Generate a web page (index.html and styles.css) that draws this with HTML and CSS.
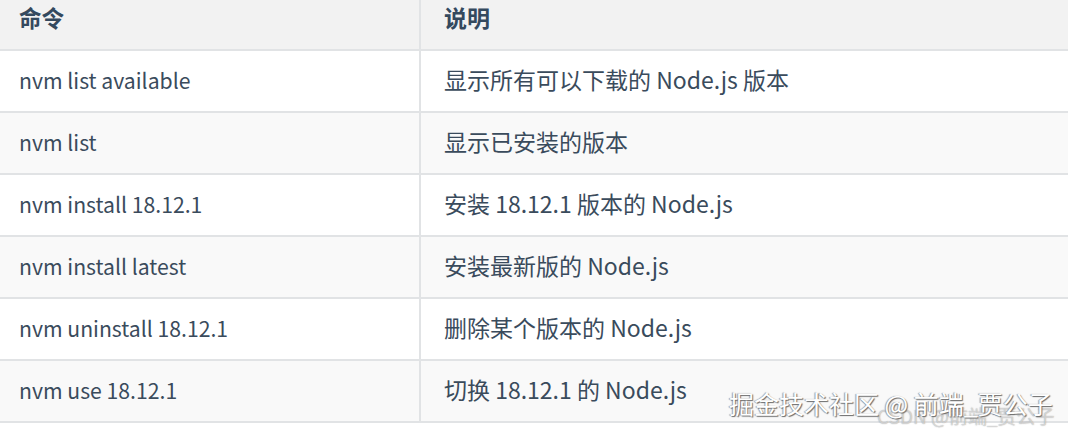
FILE: index.html
```html
<!DOCTYPE html>
<html lang="zh-CN">
<head>
<meta charset="utf-8">
<link rel="stylesheet" href="styles.css">
</head>
<body>
<div class="page">
  <table class="cmd-table">
    <thead>
      <tr><th class="c1">命令</th><th class="c2">说明</th></tr>
    </thead>
    <tbody>
      <tr><td class="c1">nvm list available</td><td class="c2">显示所有可以下载的 Node.js 版本</td></tr>
      <tr><td class="c1">nvm list</td><td class="c2">显示已安装的版本</td></tr>
      <tr><td class="c1">nvm install 18.12.1</td><td class="c2">安装 18.12.1 版本的 Node.js</td></tr>
      <tr><td class="c1">nvm install latest</td><td class="c2">安装最新版的 Node.js</td></tr>
      <tr><td class="c1">nvm uninstall 18.12.1</td><td class="c2">删除某个版本的 Node.js</td></tr>
      <tr><td class="c1">nvm use 18.12.1</td><td class="c2">切换 18.12.1 的 Node.js</td></tr>
    </tbody>
  </table>
  <div class="wm-csdn">CSDN @前端_贾公子</div>
  <div class="wm-juejin">掘金技术社区 @ 前端_贾公子</div>
</div>
</body>
</html>
```

FILE: styles.css
```css
html, body {
  margin: 0;
  padding: 0;
  background: #ffffff;
  overflow: hidden;
}
.page {
  position: relative;
  width: 1068px;
  height: 432px;
  overflow: hidden;
}
.cmd-table {
  border-collapse: collapse;
  margin-top: -13px;
  margin-left: -7px;
  width: 1100px;
  font-family: "Noto Sans CJK SC", "Noto Sans", sans-serif;
  color: #3a4b5c;
}
.cmd-table th,
.cmd-table td {
  border: 2px solid #e1e3e5;
  height: 62px;
  padding: 0 0 4px 23px;
  text-align: left;
  vertical-align: middle;
  box-sizing: border-box;
}
.cmd-table .c1 {
  width: 426px;
  padding-left: 24px;
  font-size: 21.2px;
}
.cmd-table .c2 {
  font-size: 23px;
}
.cmd-table th.c1 {
  font-size: 22.5px;
}
.cmd-table th {
  background: #f2f2f2;
  font-weight: 700;
  color: #34495e;
}
.cmd-table tbody tr:nth-child(odd) td {
  background: #ffffff;
}
.cmd-table tbody tr:nth-child(even) td {
  background: #f9f9f9;
}
.wm-csdn {
  position: absolute;
  left: 877px;
  top: 402px;
  font-family: "Noto Sans CJK SC", sans-serif;
  font-size: 19px;
  color: rgba(255,255,255,0.5);
  text-shadow: 0 0 1px rgba(110,110,110,0.7);
  white-space: nowrap;
}
.wm-juejin {
  position: absolute;
  left: 729px;
  top: 385px;
  font-family: "Noto Sans CJK SC", sans-serif;
  font-size: 25px;
  color: #ffffff;
  text-shadow: 1px 1px 1px #6a6a6a, -1px 0 1px #9a9a9a;
  white-space: nowrap;
}
```
